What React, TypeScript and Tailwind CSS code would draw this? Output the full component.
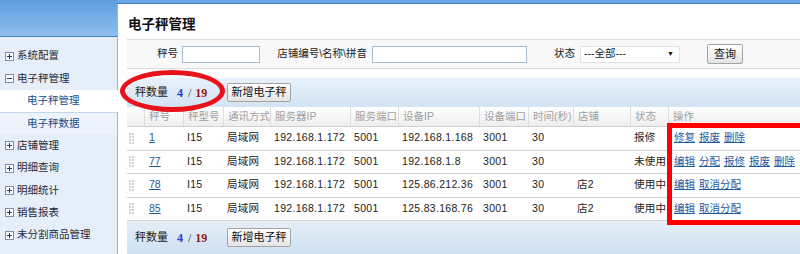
import React from 'react';

/**
 * 电子秤管理 - scale list page
 */

type Scale = {
  id: string;
  model: string;
  conn: string;
  serverIp: string;
  serverPort: string;
  deviceIp: string;
  devicePort: string;
  time: string;
  store: string;
  status: string;
  ops: string[];
};

const scales: Scale[] = [
  { id: '1', model: 'I15', conn: '局域网', serverIp: '192.168.1.172', serverPort: '5001', deviceIp: '192.168.1.168', devicePort: '3001', time: '30', store: '', status: '报修', ops: ['修复', '报废', '删除'] },
  { id: '77', model: 'I15', conn: '局域网', serverIp: '192.168.1.172', serverPort: '5001', deviceIp: '192.168.1.8', devicePort: '3001', time: '30', store: '', status: '未使用', ops: ['编辑', '分配', '报修', '报废', '删除'] },
  { id: '78', model: 'I15', conn: '局域网', serverIp: '192.168.1.172', serverPort: '5001', deviceIp: '125.86.212.36', devicePort: '3001', time: '30', store: '店2', status: '使用中', ops: ['编辑', '取消分配'] },
  { id: '85', model: 'I15', conn: '局域网', serverIp: '192.168.1.172', serverPort: '5001', deviceIp: '125.83.168.76', devicePort: '3001', time: '30', store: '店2', status: '使用中', ops: ['编辑', '取消分配'] },
];

const menu = [
  { label: '系统配置', open: false },
  { label: '电子秤管理', open: true, children: ['电子秤管理', '电子秤数据'] },
  { label: '店铺管理', open: false },
  { label: '明细查询', open: false },
  { label: '明细统计', open: false },
  { label: '销售报表', open: false },
  { label: '未分割商品管理', open: false },
];

function ToggleIcon({ open }: { open?: boolean }) {
  return (
    <svg width="9" height="9" viewBox="0 0 9 9" className="shrink-0">
      <rect x="0.5" y="0.5" width="8" height="8" fill="#fbfdff" stroke="#7890ae" />
      <path d="M2 4.5h5" stroke="#1d3d70" />
      {!open && <path d="M4.5 2v5" stroke="#1d3d70" />}
    </svg>
  );
}

function Grip() {
  return (
    <svg width="5" height="11" viewBox="0 0 5 11">
      {[0, 3, 6, 9].map((y) => (
        <g key={y} fill="#d2d2d2">
          <rect x="0" y={y} width="2" height="2" />
          <rect x="3" y={y} width="2" height="2" />
        </g>
      ))}
    </svg>
  );
}

function Button({ children, className = '' }: { children: React.ReactNode; className?: string }) {
  return (
    <button
      className={`flex items-center justify-center rounded-[2px] border border-[#a3a3a3] bg-gradient-to-b from-white to-[#e4e4e4] text-[11px] text-[#111] shadow-[inset_0_1px_0_#fff] ${className}`}
    >
      {children}
    </button>
  );
}

function Count() {
  return (
    <div className="flex items-center text-[11px] text-[#222]">
      <span>秤数量</span>
      <span className="ml-[9px] font-[family-name:'Liberation_Serif',serif] text-[12px] font-bold text-[#1b3fd0]">4</span>
      <span className="ml-[5px] font-[family-name:'Liberation_Serif',serif] text-[12px] text-[#333]">/</span>
      <span className="ml-[4px] font-[family-name:'Liberation_Serif',serif] text-[12px] font-bold text-[#8f1616]">19</span>
    </div>
  );
}

const colWidths = ['w-[17px]', 'w-[39px]', 'w-[40px]', 'w-[47px]', 'w-[80px]', 'w-[48px]', 'w-[81px]', 'w-[49px]', 'w-[45px]', 'w-[57px]', 'w-[38px]', 'w-[200px]'];
const headers = ['', '秤号', '秤型号', '通讯方式', '服务器IP', '服务端口', '设备IP', '设备端口', '时间(秒)', '店铺', '状态', '操作'];

export default function App() {
  return (
    <div className="relative flex h-[254px] w-[800px] overflow-hidden bg-[#e5eef9] font-[family-name:'Liberation_Sans','Noto_Sans_CJK_SC',sans-serif]">
      {/* Sidebar */}
      <aside className="flex w-[117px] shrink-0 flex-col">
        <div className="h-[37px] border-b border-[#3f7cc2] bg-gradient-to-b from-[#5d9ddf] to-[#8fbfee]" />
        <div className="pt-[8px]">
          {menu.map((item) => (
            <div key={item.label}>
              <div className="flex h-[22.4px] items-center gap-[3px] pl-[5px] text-[10.5px] text-[#1e2a3a]">
                <ToggleIcon open={item.open} />
                <span>{item.label}</span>
              </div>
              {item.children?.map((child, i) => (
                <div
                  key={child}
                  className={
                    i === 0
                      ? 'relative z-10 flex h-[22.4px] w-[118px] items-center bg-white pl-[27px] text-[10.5px] text-[#1b4c8c]'
                      : 'flex h-[22.4px] items-center border-t border-[#c3d5ea] bg-[#edf3fb] pl-[27px] text-[10.5px] text-[#1b4c8c]'
                  }
                >
                  {child}
                </div>
              ))}
            </div>
          ))}
        </div>
      </aside>

      {/* Main */}
      <main className="flex min-w-0 flex-1 flex-col">
        <div className="h-[4px] shrink-0 border-b border-[#3f7cc2] bg-[#6aa7e4]" />
        <div className="flex min-h-0 flex-1 flex-col border-l border-[#9ab4d2] bg-white pl-[9px]">
          {/* Title */}
          <div className="flex h-[35px] shrink-0 items-center pl-[1px] pt-[8px] text-[13.5px] font-bold text-[#111]">
            电子秤管理
          </div>

          {/* Search */}
          <div className="flex h-[30px] shrink-0 items-center border-y border-[#dadada] bg-[#f8f8f8] text-[10.5px] text-[#222]">
            <span className="w-[55px] pr-[4px] text-right">秤号</span>
            <input className="h-[17px] w-[78px] border border-[#a9bbcf] bg-white" />
            <span className="w-[112px] pr-[5px] text-right">店铺编号\名称\拼音</span>
            <input className="h-[17px] w-[155px] border border-[#a9bbcf] bg-white" />
            <span className="w-[53px] pr-[5px] text-right">状态</span>
            <div className="flex h-[17px] w-[100px] items-center justify-between border border-[#dfe4ea] bg-white pl-[3px] pr-[5px]">
              <span>---全部---</span>
              <span className="text-[7px] text-[#111]">▼</span>
            </div>
            <Button className="ml-[27px] h-[20px] w-[36px]">查询</Button>
          </div>

          <div className="h-[9px] shrink-0" />

          {/* Toolbar */}
          <div className="flex h-[29px] shrink-0 items-center bg-gradient-to-b from-[#e8f1fa] to-[#d3e3f2] pl-[8px]">
            <div className="w-[92px]">
              <Count />
            </div>
            <Button className="h-[19px] w-[64px]">新增电子秤</Button>
          </div>

          {/* Table */}
          <div className="shrink-0 text-[10.5px]">
            <div className="flex h-[20px] border-b border-[#cfcfcf] bg-gradient-to-b from-white to-[#eeeeee] text-[#a0a0a0]">
              {headers.map((h, i) => (
                <div
                  key={i}
                  className={`${colWidths[i]} flex shrink-0 items-center pl-[4px] ${i > 0 ? 'border-l border-[#dedede]' : ''}`}
                >
                  {h}
                </div>
              ))}
            </div>
            {scales.map((s) => {
              const cells = [s.model, s.conn, s.serverIp, s.serverPort, s.deviceIp, s.devicePort, s.time, s.store, s.status];
              return (
                <div key={s.id} className="flex h-[23.5px] border-b border-[#d4d4d4] text-[#222]">
                  <div className={`${colWidths[0]} flex shrink-0 items-center pl-[2px]`}>
                    <Grip />
                  </div>
                  <div className={`${colWidths[1]} flex shrink-0 items-center pl-[5px]`}>
                    <a className="text-[#1d5a9c] underline">{s.id}</a>
                  </div>
                  {cells.map((c, i) => (
                    <div
                      key={i}
                      className={`${colWidths[i + 2]} flex shrink-0 items-center pl-[4px] tracking-[0.3px]`}
                    >
                      {c}
                    </div>
                  ))}
                  <div className={`${colWidths[11]} flex shrink-0 items-center gap-[4px] pl-[6px]`}>
                    {s.ops.map((op) => (
                      <a key={op} className="text-[#1d5a9c] underline">
                        {op}
                      </a>
                    ))}
                  </div>
                </div>
              );
            })}
          </div>

          {/* Footer */}
          <div className="flex flex-1 items-center bg-gradient-to-b from-[#e5eff9] to-[#cfe0f1] pl-[8px]">
            <div className="w-[92px]">
              <Count />
            </div>
            <Button className="h-[19px] w-[64px]">新增电子秤</Button>
          </div>
        </div>
      </main>

      {/* Annotations */}
      <div className="absolute left-[120px] top-[70px] h-[42px] w-[105px] rounded-[50%] border-[5px] border-[#e8121b]" />
      <div className="absolute left-[667px] top-[123px] h-[102px] w-[140px] border-[5px] border-[#ff0000]" />
    </div>
  );
}
